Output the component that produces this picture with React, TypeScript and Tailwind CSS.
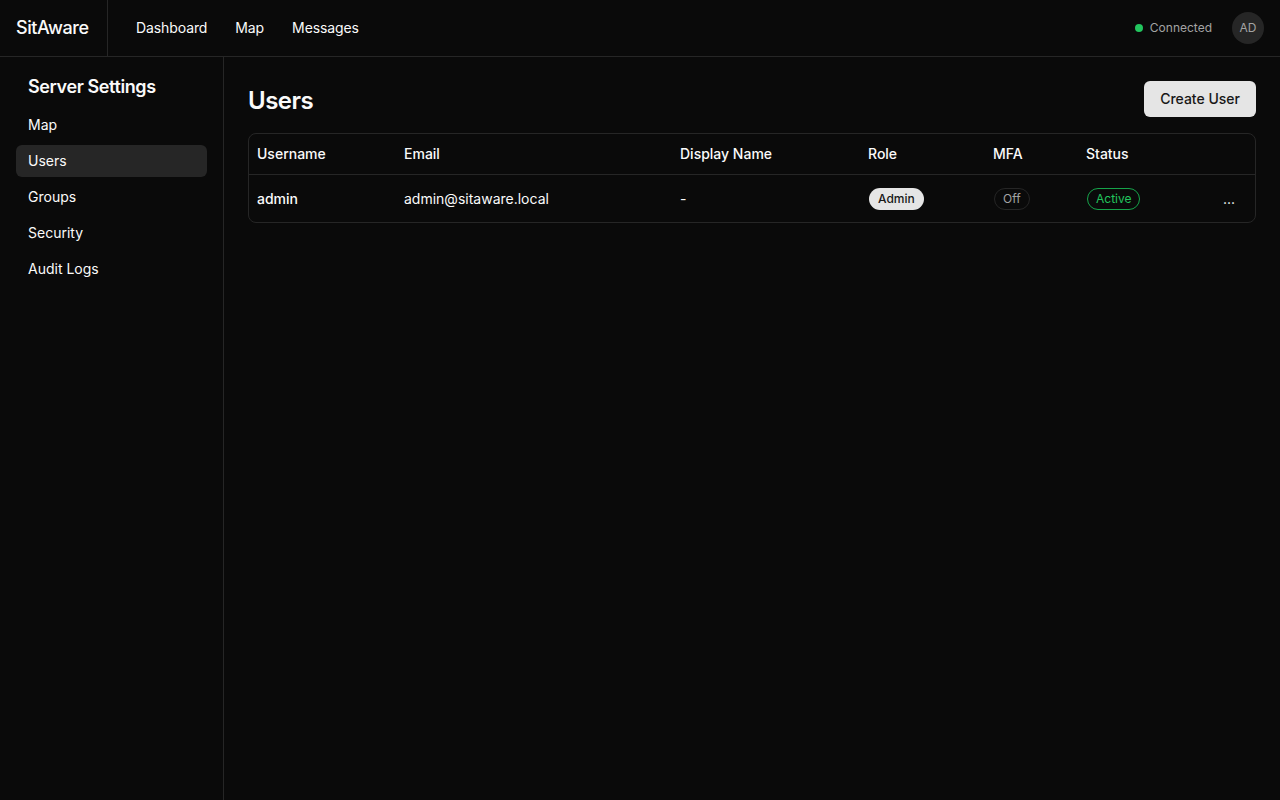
import { useState } from "react";

const navLinks = ["Dashboard", "Map", "Messages"];
const settingsLinks = ["Map", "Users", "Groups", "Security", "Audit Logs"];

const users = [
  {
    username: "admin",
    email: "admin@sitaware.local",
    displayName: "-",
    role: "Admin",
    mfa: "Off",
    status: "Active",
  },
];

export default function App() {
  const [active, setActive] = useState("Users");

  return (
    <div
      className="min-h-screen bg-[#0a0a0a] text-[#fafafa] flex flex-col"
      style={{ fontFamily: "Inter, 'Noto Sans', sans-serif" }}
    >
      {/* top bar */}
      <header className="h-[57px] flex items-stretch border-b border-[#262626] shrink-0">
        <div className="w-[108px] flex items-center pl-4 border-r border-[#262626]">
          <span className="text-lg font-medium tracking-tight">SitAware</span>
        </div>
        <nav className="flex items-center gap-7 pl-7">
          {navLinks.map((link) => (
            <a key={link} className="text-sm text-[#fafafa] tracking-[-0.1px] cursor-pointer">
              {link}
            </a>
          ))}
        </nav>
        <div className="ml-auto flex items-center pr-4">
          <div className="flex items-center gap-[7px]">
            <span className="w-2 h-2 rounded-full bg-[#22c55e]" />
            <span className="text-xs text-[#a3a3a3]">Connected</span>
          </div>
          <div className="ml-5 w-8 h-8 rounded-full bg-[#262626] flex items-center justify-center text-xs text-[#a3a3a3]">
            AD
          </div>
        </div>
      </header>

      <div className="flex flex-1">
        {/* sidebar */}
        <aside className="w-[224px] shrink-0 border-r border-[#262626] p-4">
          <h2 className="text-lg font-semibold px-3 tracking-[-0.4px]">Server Settings</h2>
          <ul className="mt-2 flex flex-col gap-1">
            {settingsLinks.map((item) => (
              <li key={item}>
                <button
                  onClick={() => setActive(item)}
                  className={`w-full text-left h-8 px-3 rounded-md text-sm ${
                    active === item ? "bg-[#262626]" : ""
                  }`}
                >
                  {item}
                </button>
              </li>
            ))}
          </ul>
        </aside>

        {/* main */}
        <main className="flex-1 p-6">
          <div className="flex items-center justify-between mb-4">
            <h1 className="text-2xl font-semibold tracking-[-0.5px] pt-[3px]">Users</h1>
            <button className="h-9 px-4 rounded-md bg-[#e5e5e5] text-[#171717] text-sm font-medium">
              Create User
            </button>
          </div>

          <div className="rounded-lg border border-[#262626] overflow-hidden">
            <table className="w-full text-sm border-collapse table-fixed">
              <colgroup>
                <col className="w-[147px]" />
                <col className="w-[276px]" />
                <col className="w-[188px]" />
                <col className="w-[125px]" />
                <col className="w-[93px]" />
                <col className="w-[110px]" />
                <col />
              </colgroup>
              <thead>
                <tr className="h-10 border-b border-[#262626]">
                  <th className="text-left font-medium px-2">Username</th>
                  <th className="text-left font-medium px-2">Email</th>
                  <th className="text-left font-medium px-2">Display Name</th>
                  <th className="text-left font-medium px-2">Role</th>
                  <th className="text-left font-medium px-2">MFA</th>
                  <th className="text-left font-medium px-2">Status</th>
                  <th />
                </tr>
              </thead>
              <tbody>
                {users.map((u) => (
                  <tr key={u.username} className="h-12">
                    <td className="px-2 pt-px font-medium">{u.username}</td>
                    <td className="px-2 pt-px">{u.email}</td>
                    <td className="px-2 pt-px">{u.displayName}</td>
                    <td className="px-2 pt-px">
                      <span className="inline-flex items-center h-[22px] px-[9px] ml-px rounded-full bg-[#e5e5e5] text-[#171717] text-xs font-medium">
                        {u.role}
                      </span>
                    </td>
                    <td className="px-2 pt-px">
                      <span className="inline-flex items-center h-[22px] px-2 ml-px rounded-full border border-[#262626] text-[#a3a3a3] text-xs">
                        {u.mfa}
                      </span>
                    </td>
                    <td className="px-2 pt-px">
                      <span className="inline-flex items-center h-[22px] px-2 ml-px rounded-full border border-[#16a34a] text-[#22c55e] text-xs">
                        {u.status}
                      </span>
                    </td>
                    <td className="pr-5 text-right">
                      <button className="text-sm leading-none pt-1">...</button>
                    </td>
                  </tr>
                ))}
              </tbody>
            </table>
          </div>
        </main>
      </div>
    </div>
  );
}
